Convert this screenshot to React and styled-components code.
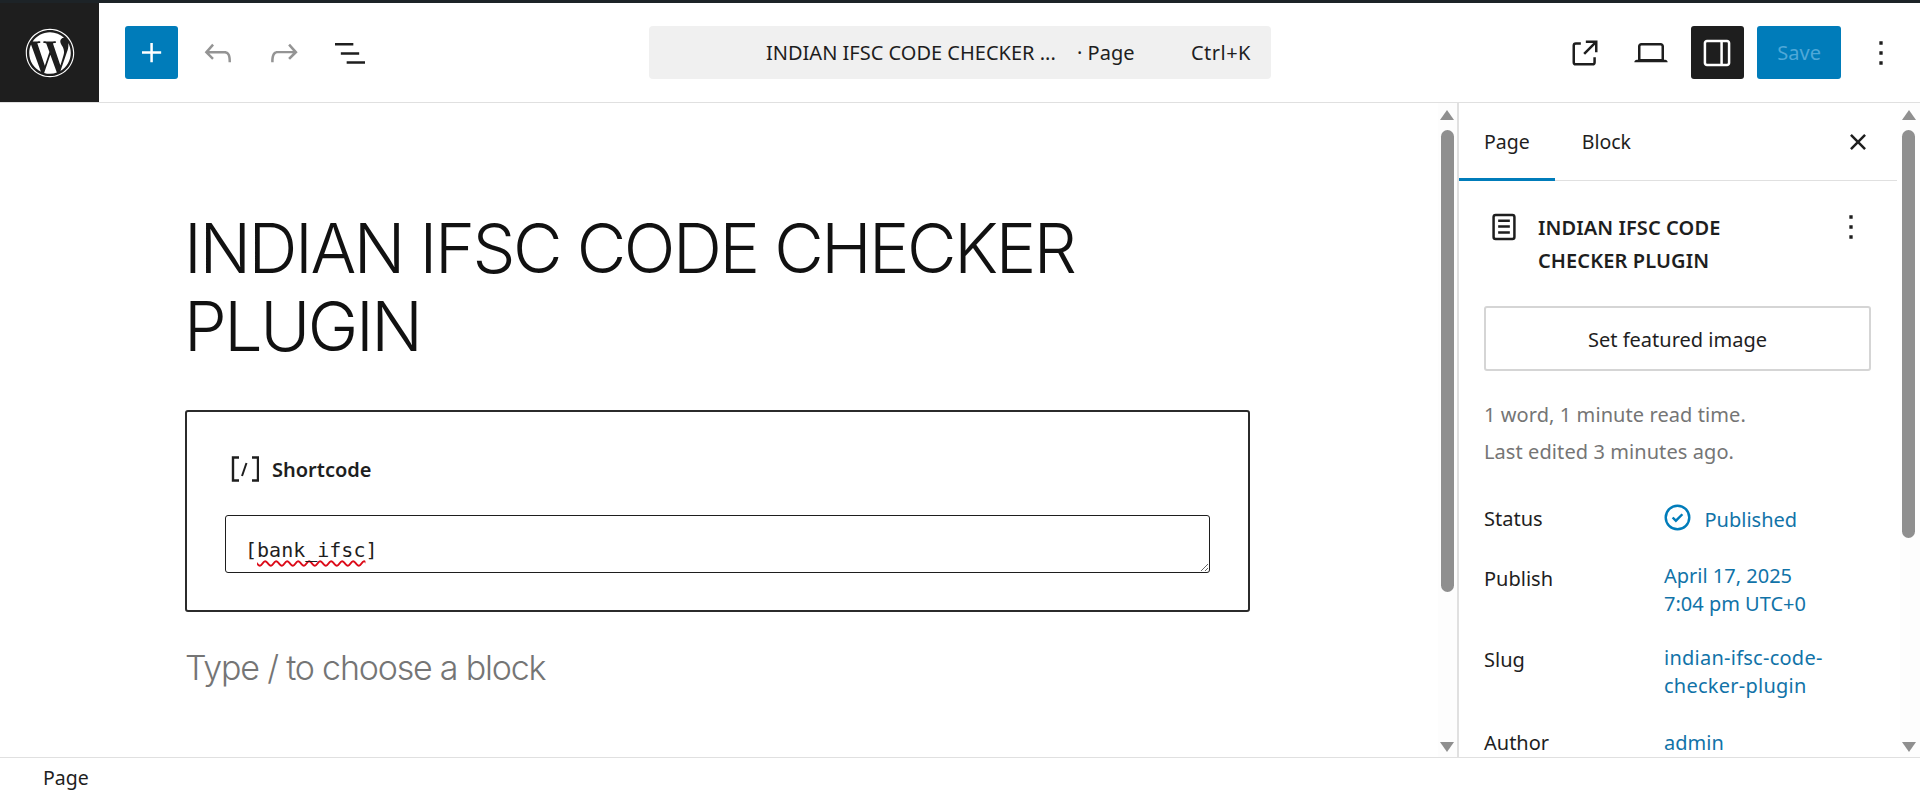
import React from "react";
import styled, { createGlobalStyle } from "styled-components";
import { FaWordpress } from "react-icons/fa";

const Global = createGlobalStyle`
  html, body { margin: 0; padding: 0; height: 100%; background: #fff; overflow: hidden; }
  * { box-sizing: border-box; }
  body { font-family: "Noto Sans", "Open Sans", sans-serif; color: #1e1e1e; font-size: 20px; }
`;

const Shell = styled.div`
  display: flex; flex-direction: column; height: 797px; width: 1920px;
  border-top: 3px solid #1d2327;
`;
const Header = styled.header`
  flex: 0 0 100px; display: grid; grid-template-columns: 1fr 622px 1fr;
  align-items: center; border-bottom: 1px solid #e0e0e0;
`;
const LeftSide = styled.div`display: flex; align-items: center; height: 99px;`;
const Logo = styled.div`
  width: 99px; height: 99px; background: #1e1e1e; color: #fff;
  display: flex; align-items: center; justify-content: center; margin-right: 26px;
`;
const Tools = styled.div`display: flex; align-items: center; gap: 13.33px;`;
const IconBtn = styled.div`
  width: 53px; height: 53px; border-radius: 3px; display: flex; align-items: center; justify-content: center;
  background: ${p => p.$bg || "transparent"};
  color: ${p => p.$color || "#1e1e1e"};
  svg { width: 40px; height: 40px; fill: currentColor; display: block; }
`;
const Command = styled.div`
  height: 53px; background: #f0f0f0; border-radius: 4px; display: flex; align-items: center;
  padding: 0 20px 0 117px; white-space: nowrap; font-size: 20px; color: #1e1e1e;
`;
const CommandTitle = styled.span`width: 311px; flex: none;`;
const CommandType = styled.span`flex: 1;`;
const Shortcut = styled.span`letter-spacing: 0.5px;`;
const RightSide = styled.div`
  display: flex; align-items: center; justify-content: flex-end; gap: 13.33px; padding-right: 12.5px;
`;
const Save = styled.div`
  width: 84px; height: 53px; border-radius: 3px; background: #007cba; color: #4fa8d8;
  display: flex; align-items: center; justify-content: center; font-size: 20px;
`;
const Main = styled.main`flex: 1; display: flex; min-height: 0; overflow: hidden;`;
const Canvas = styled.section`flex: 1; display: flex; min-width: 0;`;
const Document = styled.div`flex: 1; padding: 106px 188px 0 185px; overflow: hidden;`;
const Title = styled.h1`
  margin: 0 0 45px -1px; font-family: Inter, sans-serif; font-weight: 300; font-size: 68px;
  line-height: 78px; color: #111; letter-spacing: -2.45px;
`;
const BlockBox = styled.div`
  height: 202px; border: 2px solid #2b2b2b; border-radius: 3px; padding: 44px 38px 0;
`;
const BlockLabel = styled.div`
  display: flex; align-items: center; gap: 13px; height: 26px; margin: 0 0 33px 6px;
  font-weight: 600; font-size: 20px; color: #1e1e1e;
`;
const CodeArea = styled.div`
  height: 58px; width: 100%; border: 1.5px solid #1e1e1e; border-radius: 3px; padding: 20px 19px 0;
  font-family: "DejaVu Sans Mono", monospace; font-size: 20px; line-height: 28px; color: #1e1e1e;
  resize: vertical; overflow: hidden;
`;
const Misspelt = styled.span`text-decoration: underline wavy #dc0a18 1.7px; text-underline-offset: 3px;`;
const Placeholder = styled.p`
  margin: 34px 0 0 0; font-family: Inter, sans-serif; font-weight: 300; font-size: 34px; line-height: 44px;
  color: #757575; letter-spacing: -1.2px;
`;
const Track = styled.div`
  flex: none; width: ${p => p.$w}px; padding: 7px ${p => p.$pr}px 0 2px; display: flex; flex-direction: column; align-items: center;
  background: #fdfdfd;
`;
const Arrow = styled.div`
  width: 0; height: 0; border-left: 7.5px solid transparent; border-right: 7.5px solid transparent;
  ${p => p.$down
    ? "border-top: 10px solid #8f8f8f; margin-top: auto; margin-bottom: 5px;"
    : "border-bottom: 10px solid #8f8f8f; margin-bottom: 10px;"}
`;
const Thumb = styled.div`width: 13px; border-radius: 7px; background: #8f8f8f; height: ${p => p.$h}px;`;
const Sidebar = styled.aside`
  flex: 0 0 463px; display: flex; border-left: 2px solid #e0e0e0; min-height: 0;
`;
const SideBody = styled.div`flex: 1; min-width: 0; overflow: hidden;`;
const Tabs = styled.div`
  height: 78px; display: flex; align-items: center; gap: 2px; border-bottom: 1px solid #e0e0e0; margin-right: 3px;
`;
const Tab = styled.div`
  height: 78px; padding: 0 25px; display: flex; align-items: center; font-size: 19.5px;
  ${p => p.$active && "box-shadow: inset 0 -3px 0 #007cba;"}
`;
const TabClose = styled.div`
  margin-left: auto; margin-right: 19.5px; width: 40px; height: 40px;
  svg { width: 40px; height: 40px; display: block; fill: #1e1e1e; }
`;
const Panel = styled.div`padding: 30px 29px 0 25px;`;
const PostHead = styled.div`display: flex; align-items: flex-start;`;
const PostIcon = styled.div`
  width: 54px; flex: none; margin-top: -4px;
  svg { width: 40px; height: 40px; fill: #1e1e1e; display: block; }
`;
const PostTitle = styled.div`flex: 1; font-weight: 600; font-size: 20px; line-height: 33px; color: #1e1e1e; letter-spacing: 0.1px;`;
const PostMore = styled.div`
  width: 40px; flex: none; margin-top: -4px;
  svg { width: 40px; height: 40px; fill: #1e1e1e; display: block; }
`;
const Featured = styled.div`
  margin-top: 29px; height: 65px; border: 2px solid #d5d5d5; border-radius: 3px; padding-top: 2px;
  display: flex; align-items: center; justify-content: center; font-size: 20px;
`;
const Meta = styled.div`margin-top: 25px; line-height: 37px; color: #757575; font-size: 20px; letter-spacing: 0.08px;`;
const Row = styled.div`
  display: grid; grid-template-columns: 180px 1fr; margin-top: ${p => p.$mt}px; line-height: 28px;
`;
const RowLabel = styled.div`font-size: 20px; color: #1e1e1e; transform: translateY(${p => p.$dy || 0}px);`;
const RowValue = styled.div`color: #1173a8; font-size: 20px; display: flex; align-items: center;`;
const ValueText = styled.div`line-height: 28px; letter-spacing: ${p => p.$ls || 0}px;`;
const StatusText = styled.span`transform: translateY(1.5px);`;
const StatusIcon = styled.svg`width: 39px; height: 39px; fill: #007cba; margin: -6px 7.5px -5px -6px; flex: none;`;
const Footer = styled.footer`
  flex: 0 0 40px; border-top: 1px solid #e0e0e0; display: flex; align-items: center; padding-left: 43px; font-size: 19.5px;
`;

const Ico = ({ d }) => <svg viewBox="0 0 24 24"><path d={d} fillRule="evenodd" /></svg>;
const P = {
  plus: "M11 12.5V17.5H12.5V12.5H17.5V11H12.5V6H11V11H6V12.5H11Z",
  undo: "M18.3 11.7c-.6-.6-1.4-.9-2.3-.9H6.7l2.9-3.3-1.1-1-4.5 5L8.5 16l1-1-2.7-2.7H16c.5 0 .9.2 1.3.5 1 1 1 3.4 1 4.5v.3h1.5v-.2c0-1.5 0-4.3-1.5-5.7z",
  redo: "M15.6 6.5l-1.1 1 2.9 3.3H8c-.9 0-1.7.3-2.3.9-1.4 1.5-1.4 4.2-1.4 5.6v.2h1.5v-.3c0-1.1 0-3.5 1-4.5.3-.3.7-.5 1.3-.5h9.2L14.5 15l1.1 1.1 4.6-4.6-4.6-5z",
  list: "M3 6h11v1.5H3V6Zm3.5 5.5h11V13h-11v-1.5ZM21 17H10v1.5h11V17Z",
  ext: "M19.5 4.5h-7V6h4.44l-5.97 5.97 1.06 1.06L18 7.06v4.44h1.5v-7Zm-13 1a2 2 0 0 0-2 2v10a2 2 0 0 0 2 2h10a2 2 0 0 0 2-2v-3H17v3a.5.5 0 0 1-.5.5h-10a.5.5 0 0 1-.5-.5v-10a.5.5 0 0 1 .5-.5h3V5.5h-3Z",
  laptop: "M20.5 16h-.7V8c0-1.1-.9-2-2-2H6.2c-1.1 0-2 .9-2 2v8h-.7c-.8 0-1.5.7-1.5 1.5h20c0-.8-.7-1.5-1.5-1.5zM5.7 8c0-.3.2-.5.5-.5h11.6c.3 0 .5.2.5.5v7.6H5.7V8z",
  drawer: "M18 4H6c-1.1 0-2 .9-2 2v12c0 1.1.9 2 2 2h12c1.1 0 2-.9 2-2V6c0-1.1-.9-2-2-2zm-4 14.5H6c-.3 0-.5-.2-.5-.5V6c0-.3.2-.5.5-.5h8v13zm4.5-.5c0 .3-.2.5-.5.5h-2.5v-13H18c.3 0 .5.2.5.5v12z",
  more: "M13 19h-2v-2h2v2zm0-6h-2v-2h2v2zm0-6h-2V5h2v2z",
  close: "M12 13.06l3.712 3.713 1.061-1.06L13.061 12l3.712-3.712-1.06-1.06L12 10.938 8.288 7.227l-1.061 1.06L10.939 12l-3.712 3.712 1.06 1.061L12 13.061z",
  page: "M15.5 7.5h-7V9h7V7.5Zm-7 3.5h7v1.5h-7V11Zm7 3.5h-7V16h7v-1.5ZM17 4H7a2 2 0 0 0-2 2v12a2 2 0 0 0 2 2h10a2 2 0 0 0 2-2V6a2 2 0 0 0-2-2ZM7 5.5h10a.5.5 0 0 1 .5.5v12a.5.5 0 0 1-.5.5H7a.5.5 0 0 1-.5-.5V6a.5.5 0 0 1 .5-.5Z",
  published: "M12 18.5a6.5 6.5 0 1 1 0-13 6.5 6.5 0 0 1 0 13ZM4 12a8 8 0 1 1 16 0 8 8 0 0 1-16 0Zm11.53-1.47-1.06-1.06L11 12.94l-1.47-1.47-1.06 1.06L11 15.06l4.53-4.53Z",
};

const ShortcodeIcon = () => (
  <svg width="28" height="26" viewBox="0 0 28 26" fill="none" stroke="#1e1e1e" strokeWidth="2.4">
    <path d="M8 1.5H2V24.5H8M21 1.5H27V24.5H21" />
    <path d="M15.5 7L11 20" strokeWidth="2" />
  </svg>
);

const Scroll = ({ w, pr, h }) => (
  <Track $w={w} $pr={pr}>
    <Arrow />
    <Thumb $h={h} />
    <Arrow $down />
  </Track>
);

export default function App() {
  return (
    <>
      <Global />
      <Shell>
        <Header>
          <LeftSide>
            <Logo><FaWordpress size={50} /></Logo>
            <Tools>
              <IconBtn $bg="#007cba" $color="#fff"><Ico d={P.plus} /></IconBtn>
              <IconBtn $color="#949494"><Ico d={P.undo} /></IconBtn>
              <IconBtn $color="#949494"><Ico d={P.redo} /></IconBtn>
              <IconBtn><Ico d={P.list} /></IconBtn>
            </Tools>
          </LeftSide>
          <Command>
            <CommandTitle>INDIAN IFSC CODE CHECKER ...</CommandTitle>
            <CommandType>· Page</CommandType>
            <Shortcut>Ctrl+K</Shortcut>
          </Command>
          <RightSide>
            <IconBtn><Ico d={P.ext} /></IconBtn>
            <IconBtn><Ico d={P.laptop} /></IconBtn>
            <IconBtn $bg="#1e1e1e" $color="#fff"><Ico d={P.drawer} /></IconBtn>
            <Save>Save</Save>
            <IconBtn><Ico d={P.more} /></IconBtn>
          </RightSide>
        </Header>
        <Main>
          <Canvas>
            <Document>
              <Title>INDIAN IFSC CODE CHECKER PLUGIN</Title>
              <BlockBox>
                <BlockLabel><ShortcodeIcon />Shortcode</BlockLabel>
                <CodeArea>[<Misspelt>bank_ifsc</Misspelt>]</CodeArea>
              </BlockBox>
              <Placeholder>Type / to choose a block</Placeholder>
            </Document>
            <Scroll w={19} pr={3} h={462} />
          </Canvas>
          <Sidebar>
            <SideBody>
              <Tabs>
                <Tab $active>Page</Tab>
                <Tab>Block</Tab>
                <TabClose><Ico d={P.close} /></TabClose>
              </Tabs>
              <Panel>
                <PostHead>
                  <PostIcon><Ico d={P.page} /></PostIcon>
                  <PostTitle>INDIAN IFSC CODE<br />CHECKER PLUGIN</PostTitle>
                  <PostMore><Ico d={P.more} /></PostMore>
                </PostHead>
                <Featured>Set featured image</Featured>
                <Meta>1 word, 1 minute read time.<br />Last edited 3 minutes ago.</Meta>
                <Row $mt={34}>
                  <RowLabel $dy={1}>Status</RowLabel>
                  <RowValue>
                    <StatusIcon viewBox="0 0 24 24"><path d={P.published} fillRule="evenodd" /></StatusIcon>
                    <StatusText>Published</StatusText>
                  </RowValue>
                </Row>
                <Row $mt={30}>
                  <RowLabel $dy={3}>Publish</RowLabel>
                  <RowValue><ValueText>April 17, 2025<br />7:04 pm UTC+0</ValueText></RowValue>
                </Row>
                <Row $mt={26}>
                  <RowLabel $dy={2}>Slug</RowLabel>
                  <RowValue><ValueText $ls={0.25}>indian-ifsc-code-<br />checker-plugin</ValueText></RowValue>
                </Row>
                <Row $mt={29}>
                  <RowLabel>Author</RowLabel>
                  <RowValue>admin</RowValue>
                </Row>
              </Panel>
            </SideBody>
            <Scroll w={20} pr={5} h={408} />
          </Sidebar>
        </Main>
        <Footer>Page</Footer>
      </Shell>
    </>
  );
}
